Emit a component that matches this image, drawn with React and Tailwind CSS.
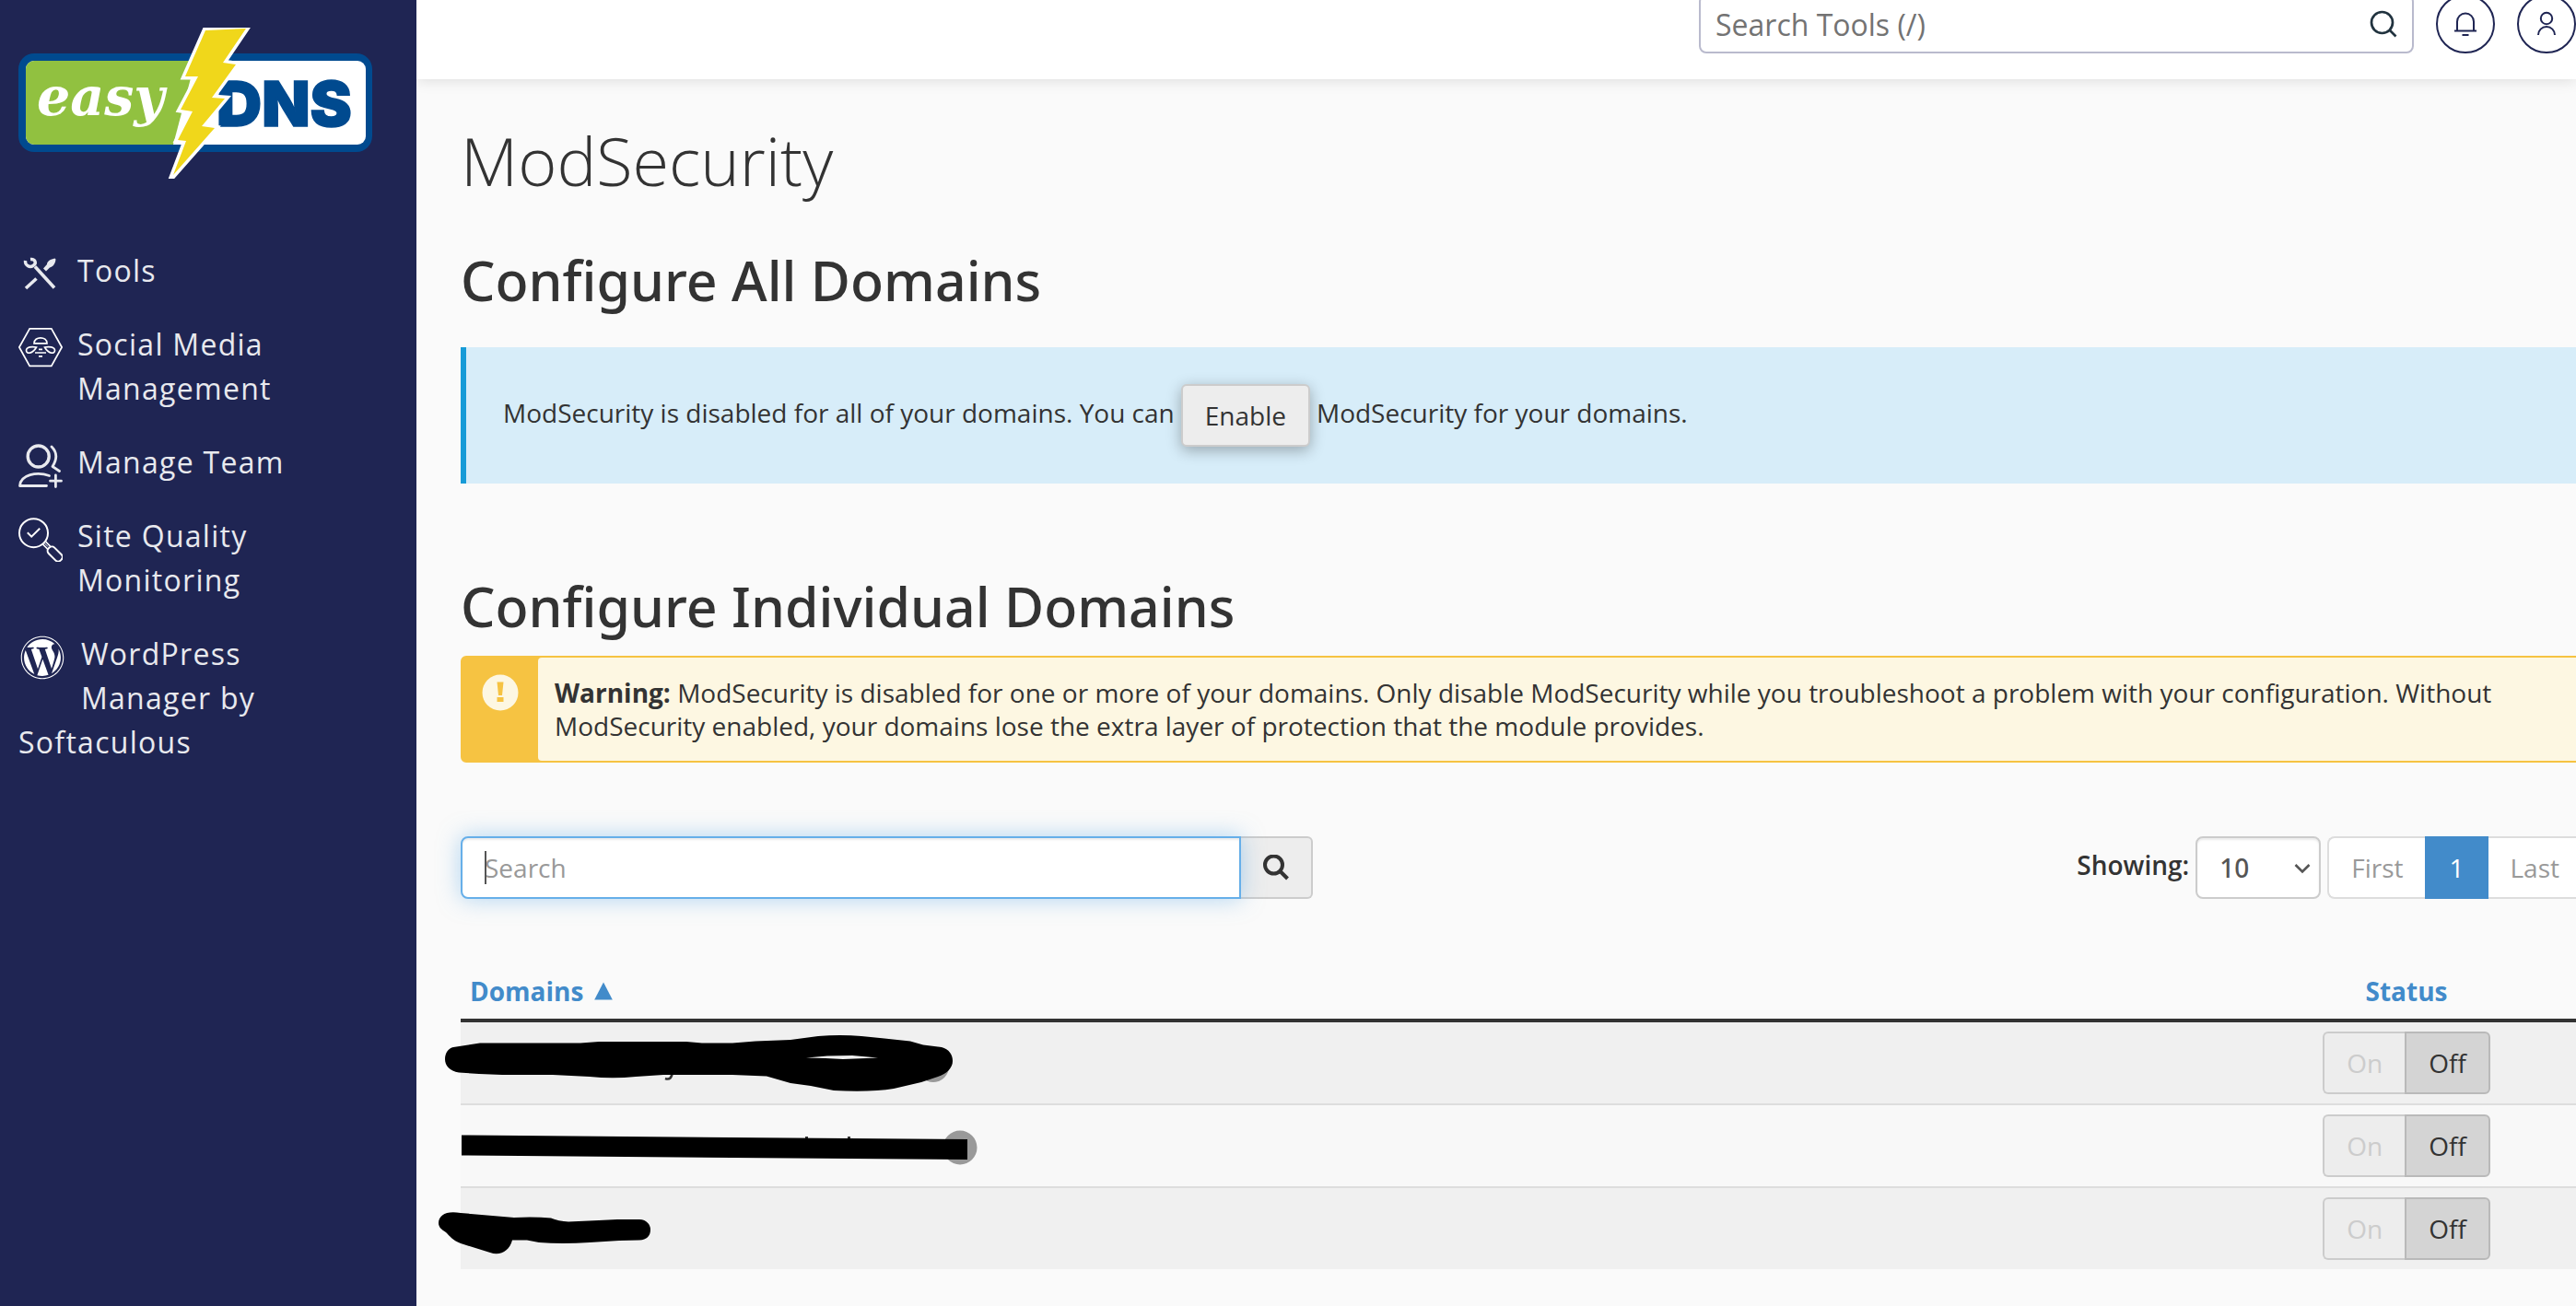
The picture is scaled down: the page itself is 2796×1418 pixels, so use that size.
import React from "react";
import { FaWordpress } from "react-icons/fa";

const iconClass = "float-left mt-1 mr-4 size-12 text-[#e8e9ee]";

function Logo() {
  return (
    <svg viewBox="0 0 384 164" className="block w-full" role="img" aria-label="easyDNS">
      <rect x="0" y="28" width="384" height="107" rx="17" fill="#004a8f" />
      <rect x="8" y="36" width="369" height="91" rx="9" fill="#fff" />
      <path d="M17 36H192L168 127H17a9 9 0 0 1-9-9V45a9 9 0 0 1 9-9z" fill="#91c140" />
      <text x="20" y="95" fontFamily="DejaVu Serif, serif" fontWeight="700" fontStyle="italic" fontSize="57" fill="#fff">easy</text>
      <text x="215" y="107" fontFamily="Inter, sans-serif" fontWeight="900" fontSize="68" fill="#004a8f" stroke="#004a8f" strokeWidth="1.500">DNS</text>
      <path
        d="M203 3 L247 1 L222 38 L236 40 L210 76 L224 77 L199 107 L213 109 L168 160 L182 123 L173 122 L189 91 L176 89 L195 53 L181 53 Z"
        fill="#f0d71b"
        stroke="#fff"
        strokeWidth="7"
        strokeMiterlimit="8"
        paintOrder="stroke"
      />
    </svg>
  );
}

function ToolsIcon() {
  return (
    <svg viewBox="0 0 48 48" className={iconClass} fill="none" stroke="currentColor" strokeWidth="3.6" aria-hidden="true">
      <path d="M18 15.500L39 38.500" />
      <path d="M7.500 9C7 14 12 17 16 14.500C20 12 18.500 7 13 7.500" strokeWidth="3.400" />
      <path d="M8 39L19.500 28.500" />
      <path d="M27 17.500L31 13C31 9.500 35 7.500 39.500 6.500L40.500 7.500C40 12 38 15.500 34 16.500L30 20.500Z" fill="currentColor" stroke="none" />
    </svg>
  );
}

function BeeIcon() {
  return (
    <svg viewBox="0 0 48 48" className="float-left mt-1 mr-4 size-12 text-white" fill="none" stroke="currentColor" strokeWidth="1.7" aria-hidden="true">
      <path d="M.9 23L12.200 2.800H35.800L47.100 23L35.800 43.300H12.200Z" />
      <path d="M17 18.800C17 10.800 31 10.800 31 18.800Z" />
      <path d="M19.500 23C15 22 8.500 22.500 8.500 26.500C8.500 31 15.500 30 19.500 23Z" />
      <path d="M28.500 23C33 22 39.500 22.500 39.500 26.500C39.500 31 32.500 30 28.500 23Z" />
      <path d="M22 25.300H26M18 29H30M22 32.800H26" />
    </svg>
  );
}

function TeamIcon() {
  return (
    <svg viewBox="0 0 48 48" className={iconClass} fill="none" stroke="currentColor" strokeWidth="2.800" strokeLinecap="round" strokeLinejoin="round" aria-hidden="true">
      <circle cx="21.700" cy="13.500" r="11.500" strokeWidth="3.400" />
      <path d="M36 3C42 9 42.500 16 37 24.500L44.500 29.500" />
      <path d="M33.500 34.500C20 29.500 2 33.500 1.500 45.500H30.500" />
      <path d="M34.500 40.200H46.500M40.400 34V46.500" />
    </svg>
  );
}

function QualityIcon() {
  return (
    <svg viewBox="0 0 48 48" className="float-left mt-1 mr-4 size-12 text-white" fill="none" stroke="currentColor" strokeWidth="2" aria-hidden="true">
      <circle cx="16.500" cy="16.700" r="15.500" />
      <path d="M9.800 16.200L14.200 20.600L23.200 11.800" />
      <path d="M26 28.500L31.500 34M29.500 26L34.500 31" strokeWidth="1.700" />
      <path d="M28.500 28L32 31.500" strokeWidth="1" />
      <rect x="30.500" y="34.800" width="18.500" height="9" rx="4" transform="rotate(45 39.500 39.300)" />
    </svg>
  );
}

const navItems = [
  { label: "Tools", icon: <ToolsIcon /> },
  { label: "Social Media Management", icon: <BeeIcon /> },
  { label: "Manage Team", icon: <TeamIcon /> },
  { label: "Site Quality Monitoring", icon: <QualityIcon /> },
  {
    label: "WordPress Manager by Softaculous",
    icon: <FaWordpress className="float-left mt-1 mr-[18px] ml-0.5 size-12 text-white" aria-hidden="true" />,
  },
];

function Sidebar() {
  return (
    <aside className="w-[452px] shrink-0 bg-[#1f2553] px-5 pt-[30px] pb-6">
      <a href="#home" className="block w-[384px]">
        <Logo />
      </a>
      <nav className="mt-[60px] w-[384px]" aria-label="Main">
        {navItems.map((item) => (
          <a key={item.label} href="#nav" className="block py-4 text-[32px] leading-[48px] tracking-[0.04em] text-[#e8e9ee]">
            {item.icon}
            {item.label}
          </a>
        ))}
      </nav>
    </aside>
  );
}

function TopBar() {
  const round = "flex size-16 shrink-0 items-center justify-center rounded-full border-2 border-[#1f2553] text-[#1f2553]";
  return (
    <header className="relative flex h-[86px] items-end justify-end gap-6 bg-white pb-7 shadow-[0_0_16px_rgba(0,0,0,0.14)]">
      <div className="flex h-16 w-[776px] items-center rounded-lg border-2 border-[#b9bacd] bg-white pr-4 pl-4">
        <input
          type="text"
          aria-label="Search Tools"
          placeholder="Search Tools (/)"
          className="min-w-0 flex-1 bg-transparent pt-0.5 text-[32px] leading-[48px] outline-none placeholder:text-[#737373]"
        />
        <svg viewBox="0 0 30 30" className="size-[30px] text-[#21333f]" fill="none" stroke="currentColor" strokeWidth="2.700" aria-hidden="true">
          <circle cx="13.500" cy="13.500" r="11.500" />
          <path d="M21.500 21.500L28.500 28.500" />
        </svg>
      </div>
      <button type="button" aria-label="Notifications" className={round}>
        <svg viewBox="0 0 28 28" className="size-7" fill="none" stroke="currentColor" strokeWidth="2" aria-hidden="true">
          <path d="M5 21V11.500a9 9 0 0 1 18 0V21M2 21.500H26M10.500 26H17.500" />
        </svg>
      </button>
      <button type="button" aria-label="Account" className={round}>
        <svg viewBox="0 0 28 28" className="size-7" fill="none" stroke="currentColor" strokeWidth="2" aria-hidden="true">
          <circle cx="14" cy="8" r="6.200" />
          <path d="M5 26a9 9 0 0 1 18 0" />
        </svg>
      </button>
    </header>
  );
}

// Marker strokes that hide each domain name.
function MarkerOne() {
  return (
    <svg viewBox="468 1110 600 88" className="pointer-events-none absolute top-0 -left-8 h-[88px] w-[600px]" role="img" aria-label="Hidden domain">
      <circle cx="1013" cy="1158" r="17" fill="#999" />
      <path d="M730 1164C729 1170 727 1173 722 1171" fill="none" stroke="#333" strokeWidth="2.500" />
      <path
        fillRule="evenodd"
        d="M483 1150C483 1143 487 1138 492 1137L521 1132.500L630 1132.500L650 1131L745 1131L762 1132.500L795 1132.500L820 1130.500L858 1129L888 1125Q912 1123 935 1125L960 1127.500L988 1130.500L1002 1134.500L1022 1137C1030 1139 1034 1145 1034 1152C1034 1160 1027 1166 1018 1169L1000 1175L970 1182Q945 1186 905 1184L880 1179L858 1176L832 1168.500L795 1167L720 1167L690 1169Q665 1171.500 640 1169L600 1167L545 1167L520 1166L498 1164.500C488 1163 483 1157 483 1150ZM875 1148.500L898 1146.500L925 1146L953 1148.500L915 1150L896 1149Z"
      />
    </svg>
  );
}

function MarkerTwo() {
  return (
    <svg viewBox="468 1200 600 88" className="pointer-events-none absolute top-0 -left-8 h-[88px] w-[600px]" role="img" aria-label="Hidden domain">
      <circle cx="1042" cy="1246" r="18.500" fill="#999" />
      <path d="M874 1234h3v4h-3zM920 1234h3v4h-3z" fill="#333" />
      <path d="M501 1232.500L1050 1237V1259L501 1254.500Z" />
    </svg>
  );
}

function MarkerThree() {
  return (
    <svg viewBox="468 1290 600 88" className="pointer-events-none absolute top-0 -left-8 h-[88px] w-[600px]" role="img" aria-label="Hidden domain">
      <path d="M476 1328C476 1319 485 1314 500 1317L558 1322Q580 1321 598 1322.500Q606 1326 617 1326.500L650 1325L670 1324H694C702 1324 706 1330 706 1335C706 1342 702 1346 694 1346.500L672 1347L640 1349Q610 1351 585 1349L572 1346.500H556C553 1358 543 1364 532 1360L500 1350C492 1347 488 1342 484 1338C479 1335 476 1332 476 1328Z" />
    </svg>
  );
}

const domains = [
  { id: "one", marker: <MarkerOne />, row: "bg-[#f0f0f0]", cell: "" },
  { id: "two", marker: <MarkerTwo />, row: "bg-[#f8f8f8]", cell: "border-t-2 border-[#ddd]" },
  { id: "three", marker: <MarkerThree />, row: "bg-[#f0f0f0]", cell: "border-t-2 border-[#ddd]" },
];

function Toggle() {
  return (
    <div className="inline-flex align-top leading-10" role="group" aria-label="ModSecurity status">
      <button type="button" className="h-[68px] rounded-l-md border-2 border-r-0 border-[#ccc] bg-[#ededed] px-6 text-[#ccc]">
        On
      </button>
      <button type="button" className="h-[68px] rounded-r-md border-2 border-[#b9b9b9] bg-[#d4d4d4] px-6 text-[#333]">
        Off
      </button>
    </div>
  );
}

export default function App() {
  return (
    <div className="flex min-h-screen overflow-hidden bg-[#fafafa] font-['Open_Sans','Noto_Sans',sans-serif] text-[28px] leading-9 text-[#333]">
      <Sidebar />
      <div className="min-w-0 flex-1 overflow-hidden">
        <TopBar />
        <main className="-mr-2 pt-12 pb-10 pl-12">
          <h1 className="text-[72px] leading-[80px] font-light">ModSecurity</h1>

          <h2 className="mt-[50px] font-['Noto_Sans','Open_Sans',sans-serif] text-[59px] leading-[80px] font-medium">
            Configure All Domains
          </h2>
          <div className="mt-[33px] flex items-start gap-[7px] border-l-6 border-[#179bd7] bg-[#d7edf9] p-10 leading-[62px]">
            <span>ModSecurity is disabled for all of your domains. You can</span>
            <button
              type="button"
              className="h-[68px] rounded-md border-2 border-[#ccc] bg-[#ededed] px-6 leading-10 shadow-[0_4px_16px_rgba(0,0,0,0.3)]"
            >
              Enable
            </button>
            <span>ModSecurity for your domains.</span>
          </div>

          <h2 className="mt-[93px] font-['Noto_Sans','Open_Sans',sans-serif] text-[59px] leading-[80px] font-medium">
            Configure Individual Domains
          </h2>
          <div className="mt-3.5 flex rounded-md border-2 border-[#f6c342] bg-[#f6c342]" role="alert">
            <div className="flex w-[82px] shrink-0 justify-center pt-[18px]">
              <svg viewBox="0 0 40 40" className="size-10" aria-hidden="true">
                <circle cx="20" cy="20" r="19.500" fill="#fdf7e2" />
                <path d="M16.500 8.500H23.500L22 23H18ZM16.500 25H23.500V30H16.500Z" fill="#f6c342" />
              </svg>
            </div>
            <p className="flex-1 rounded-sm bg-[#fdf7e2] py-5 pr-10 pl-[18px]">
              <strong className="font-bold">Warning:</strong> ModSecurity is disabled for one or more of your domains. Only
              disable ModSecurity while you troubleshoot a problem with your configuration. Without ModSecurity enabled, your
              domains lose the extra layer of protection that the module provides.
            </p>
          </div>

          <div className="mt-20 flex items-start justify-between gap-8">
            <form className="flex w-full max-w-[925px]" role="search" onSubmit={(e) => e.preventDefault()}>
              <div className="relative flex-1">
                <input
                  type="text"
                  aria-label="Search domains"
                  placeholder="Search"
                  className="h-[68px] w-full rounded-l-lg border-2 border-[#66afe9] bg-white px-6 leading-10 shadow-[inset_0_2px_2px_rgba(0,0,0,0.08),0_0_24px_rgba(102,175,233,0.5)] outline-none placeholder:text-[#999]"
                />
                <span className="absolute top-4 left-[26px] h-9 w-0.5 bg-[#555]" />
              </div>
              <button
                type="submit"
                aria-label="Search"
                className="flex h-[68px] w-[78px] items-center justify-center rounded-r-md border-2 border-l-0 border-[#ccc] bg-[#ededed]"
              >
                <svg viewBox="0 0 28 28" className="size-7" fill="none" stroke="currentColor" strokeWidth="4" aria-hidden="true">
                  <circle cx="11.500" cy="11" r="9.500" />
                  <path d="M18.500 18L26.500 26" />
                </svg>
              </button>
            </form>

            <div className="flex shrink-0 items-start gap-[7px]">
              <label htmlFor="page-size" className="leading-[62px] font-semibold">
                Showing:
              </label>
              <div className="relative">
                <select
                  id="page-size"
                  defaultValue="10"
                  className="h-[68px] w-[136px] appearance-none rounded-lg border-2 border-[#ccc] bg-white px-6 font-['Noto_Sans','Open_Sans',sans-serif] font-medium text-[#555] shadow-[inset_0_2px_2px_rgba(0,0,0,0.08)]"
                >
                  <option>10</option>
                  <option>20</option>
                  <option>50</option>
                </select>
                <svg viewBox="0 0 20 20" className="pointer-events-none absolute top-6 right-2.5 size-5" fill="none" stroke="#555" strokeWidth="2.600" aria-hidden="true">
                  <path d="M2.500 7L10 14.500L17.500 7" />
                </svg>
              </div>
              <nav className="flex text-[#999]" aria-label="Pages">
                <button type="button" className="h-[68px] rounded-l-lg border-2 border-r-0 border-[#ddd] bg-white px-6">
                  First
                </button>
                <button type="button" aria-current="page" className="h-[68px] bg-[#428bca] px-[26px] text-white">
                  1
                </button>
                <button type="button" className="h-[68px] rounded-r-lg border-2 border-l-0 border-[#ddd] bg-white px-6">
                  Last
                </button>
              </nav>
            </div>
          </div>

          <table className="mt-[72px] w-full border-separate border-spacing-0">
            <thead>
              <tr className="text-[#428bca]">
                <th scope="col" className="border-b-4 border-[#333] px-2.5 pt-2.5 pb-3 text-left font-bold">
                  <button type="button" className="flex items-center gap-3">
                    Domains
                    <svg viewBox="0 0 20 20" className="size-5" fill="currentColor" aria-hidden="true">
                      <path d="M10 .5L19.800 19.500H.2Z" />
                    </svg>
                  </button>
                </th>
                <th scope="col" className="w-[384px] border-b-4 border-[#333] pt-2.5 pb-3 text-center font-bold">
                  Status
                </th>
              </tr>
            </thead>
            <tbody>
              {domains.map((d) => (
                <tr key={d.id} className={d.row}>
                  <td className={"relative " + d.cell}>{d.marker}</td>
                  <td className={"py-2.5 text-center " + d.cell}>
                    <Toggle />
                  </td>
                </tr>
              ))}
            </tbody>
          </table>
        </main>
      </div>
    </div>
  );
}
